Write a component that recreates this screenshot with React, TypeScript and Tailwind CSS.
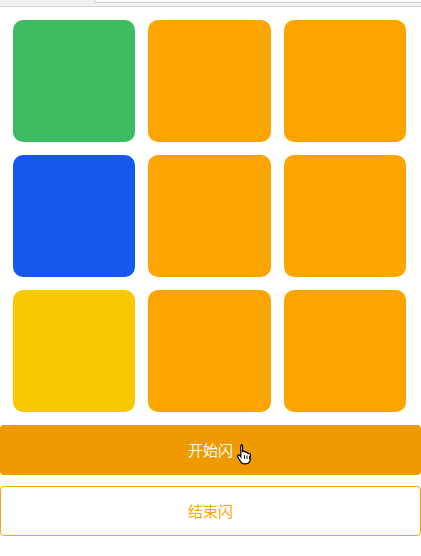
import React from "react";

const colors = [
  "bg-[#3cbb61]",
  "bg-[#fca500]",
  "bg-[#fca500]",
  "bg-[#1558ee]",
  "bg-[#fca500]",
  "bg-[#fca500]",
  "bg-[#f8c900]",
  "bg-[#fca500]",
  "bg-[#fca500]",
];

function HandCursor() {
  return (
    <svg width="18" height="22" viewBox="0 0 16 20" className="absolute left-[236px] top-[443px]">
      <path
        d="M4.5 1.5c.8 0 1.3.6 1.3 1.4v5.3c.2-.5.7-.8 1.2-.8.7 0 1.2.5 1.2 1.2v.3c.2-.4.6-.7 1.1-.7.7 0 1.2.5 1.2 1.2v.5c.2-.4.6-.6 1.1-.6.7 0 1.2.5 1.2 1.2v3.8c0 2.6-1.6 4.6-4.3 4.6H7.2c-1.5 0-2.3-.7-3.1-1.8L1.4 12.6c-.4-.6-.2-1.3.4-1.6.6-.3 1.2 0 1.6.5l.8 1.1V2.9c0-.8.5-1.4 1.3-1.4z"
        fill="#fff"
        stroke="#000"
        strokeWidth="1.1"
      />
      <path d="M7.5 11v3.5M9.8 11.3v3.2M12.1 12v2.6" stroke="#000" strokeWidth="0.9" />
    </svg>
  );
}

export default function App() {
  return (
    <div className="relative w-[421px] h-[556px] bg-white overflow-hidden" style={{ fontFamily: '"Noto Sans CJK SC", "Noto Sans", sans-serif' }}>
      <div className="relative h-[7px] bg-[#f2f2f2] border-b border-[#d6d6d6]">
        <div className="absolute left-[94px] right-0 top-[-2px] h-[5px] bg-[#fafafa] border-l border-b border-[#cfcfcf]" />
      </div>
      <div className="grid grid-cols-3 gap-[13px] pl-[13px] pr-[15px] pt-[13px]">
        {colors.map((c, i) => (
          <div key={i} className={`${c} h-[122px] rounded-[10px]`} />
        ))}
      </div>
      <button className="mt-[13px] w-full h-[50px] rounded-[4px] bg-[#ee9a00] text-white text-[15px] flex items-center justify-center">
        开始闪
      </button>
      <button className="mt-[11px] w-full h-[50px] rounded-[4px] bg-white border border-[#f9a800] text-[#f9a800] text-[15px] flex items-center justify-center">
        结束闪
      </button>
      <HandCursor />
    </div>
  );
}
